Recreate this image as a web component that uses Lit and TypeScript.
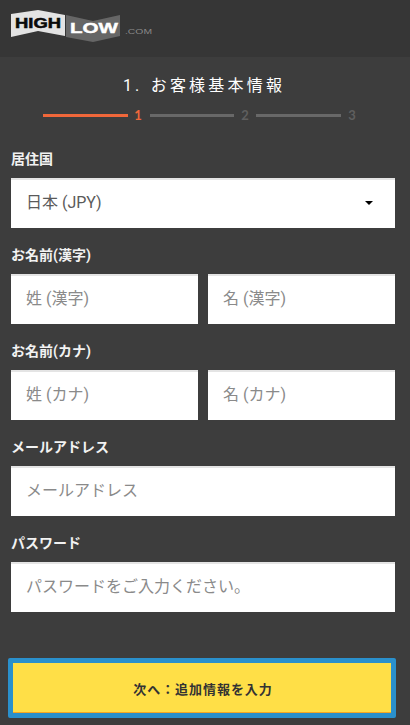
import { LitElement, html, css } from "lit";
import { customElement } from "lit/decorators.js";

@customElement("app-root")
export class AppRoot extends LitElement {
  static styles = css`
    :host { display: block; width: 410px; height: 725px; background: #3d3d3d; overflow: hidden; font-family: Roboto, "Noto Sans CJK JP", sans-serif; }
    header { height: 57px; background: #363636; padding: 10px 0 0 11px; box-sizing: border-box; }
    header svg { display: block; }
    .logo-text { font-family: "Liberation Sans", sans-serif; font-weight: 700; }
    .title { margin: 0; height: 24px; padding: 17px 2px 0 0; line-height: 24px; text-align: center; color: #fff; font-size: 16px; font-weight: 400; letter-spacing: 3.2px; word-spacing: 1px; }
    .steps { display: flex; align-items: center; margin: 7px 0 0 43px; height: 20px; }
    .bar { height: 3px; background: #686868; }
    .bar.on { background: #f0673a; }
    .num { font-family: Lato, sans-serif; font-weight: 700; font-size: 13px; width: 22px; text-align: center; color: #5f5f5f; }
    .num.on { color: #f0673a; margin-left: -1px; margin-right: 1px; }
    form { padding: 0 15px 0 11px; display: flex; flex-direction: column; gap: 15px; margin-top: 22px; }
    .group { display: flex; flex-direction: column; }
    label { height: 31px; line-height: 24px; box-sizing: border-box; color: #f2f2f2; font-size: 14px; font-weight: 700; }
    .row { display: flex; gap: 10px; }
    .field { flex: 1; height: 50px; box-sizing: border-box; background: #fff; border-top: 2px solid #e4e4e4; display: flex; align-items: center; padding: 0 0 6px 15px; font-size: 16px; color: #8a8a8a; }
    .select { color: #5a5a5a; justify-content: space-between; padding-right: 22px; padding-bottom: 3px; }
    .select .value { padding-bottom: 3px; }
    .caret { width: 0; height: 0; border-left: 4px solid transparent; border-right: 4px solid transparent; border-top: 4px solid #000; }
    .cta-wrap { margin: 46px 0 0 8px; width: 388px; height: 60px; box-sizing: border-box; border: 5px solid #2a90cc; border-radius: 2px; background: #ffdf47; }
    .cta { width: 100%; height: 100%; border: 0; border-bottom: 1px solid #f5a623; background: #ffdf47; color: #333; font-family: inherit; font-size: 13px; font-weight: 700; letter-spacing: .95px; padding: 2px 0 0 2px; }
  `;

  render() {
    return html`
      <header>
        <svg width="150" height="36" viewBox="0 0 150 36">
          <polygon points="0,4 27,0 54,5 54,26 27,21 0,27" fill="#e3e3e3" />
          <polygon points="55,5 82,11 109,5 109,26 82,32 55,27" fill="#666" />
          <text class="logo-text" x="4" y="18" font-size="14" fill="#0a0a0a" stroke="#0a0a0a" stroke-width=".5" textLength="46" lengthAdjust="spacingAndGlyphs">HIGH</text>
          <text class="logo-text" x="59" y="23" font-size="14" fill="#fff" stroke="#fff" stroke-width=".4" textLength="48" lengthAdjust="spacingAndGlyphs">LOW</text>
          <text class="logo-text" x="114" y="24" font-size="7" fill="#8a8a8a" textLength="27" lengthAdjust="spacingAndGlyphs" style="font-weight:400">.COM</text>
        </svg>
      </header>
      <h1 class="title">1. お客様基本情報</h1>
      <div class="steps">
        <div class="bar on" style="width:85px"></div><div class="num on">1</div>
        <div class="bar" style="width:84px"></div><div class="num">2</div>
        <div class="bar" style="width:85px"></div><div class="num">3</div>
      </div>
      <form>
        <div class="group">
          <label>居住国</label>
          <div class="row"><div class="field select"><span class="value">日本 (JPY)</span><span class="caret"></span></div></div>
        </div>
        <div class="group">
          <label>お名前(漢字)</label>
          <div class="row"><div class="field">姓 (漢字)</div><div class="field">名 (漢字)</div></div>
        </div>
        <div class="group">
          <label>お名前(カナ)</label>
          <div class="row"><div class="field">姓 (カナ)</div><div class="field">名 (カナ)</div></div>
        </div>
        <div class="group">
          <label>メールアドレス</label>
          <div class="row"><div class="field">メールアドレス</div></div>
        </div>
        <div class="group">
          <label>パスワード</label>
          <div class="row"><div class="field">パスワードをご入力ください。</div></div>
        </div>
      </form>
      <div class="cta-wrap"><button class="cta" type="button">次へ：追加情報を入力</button></div>
    `;
  }
}
